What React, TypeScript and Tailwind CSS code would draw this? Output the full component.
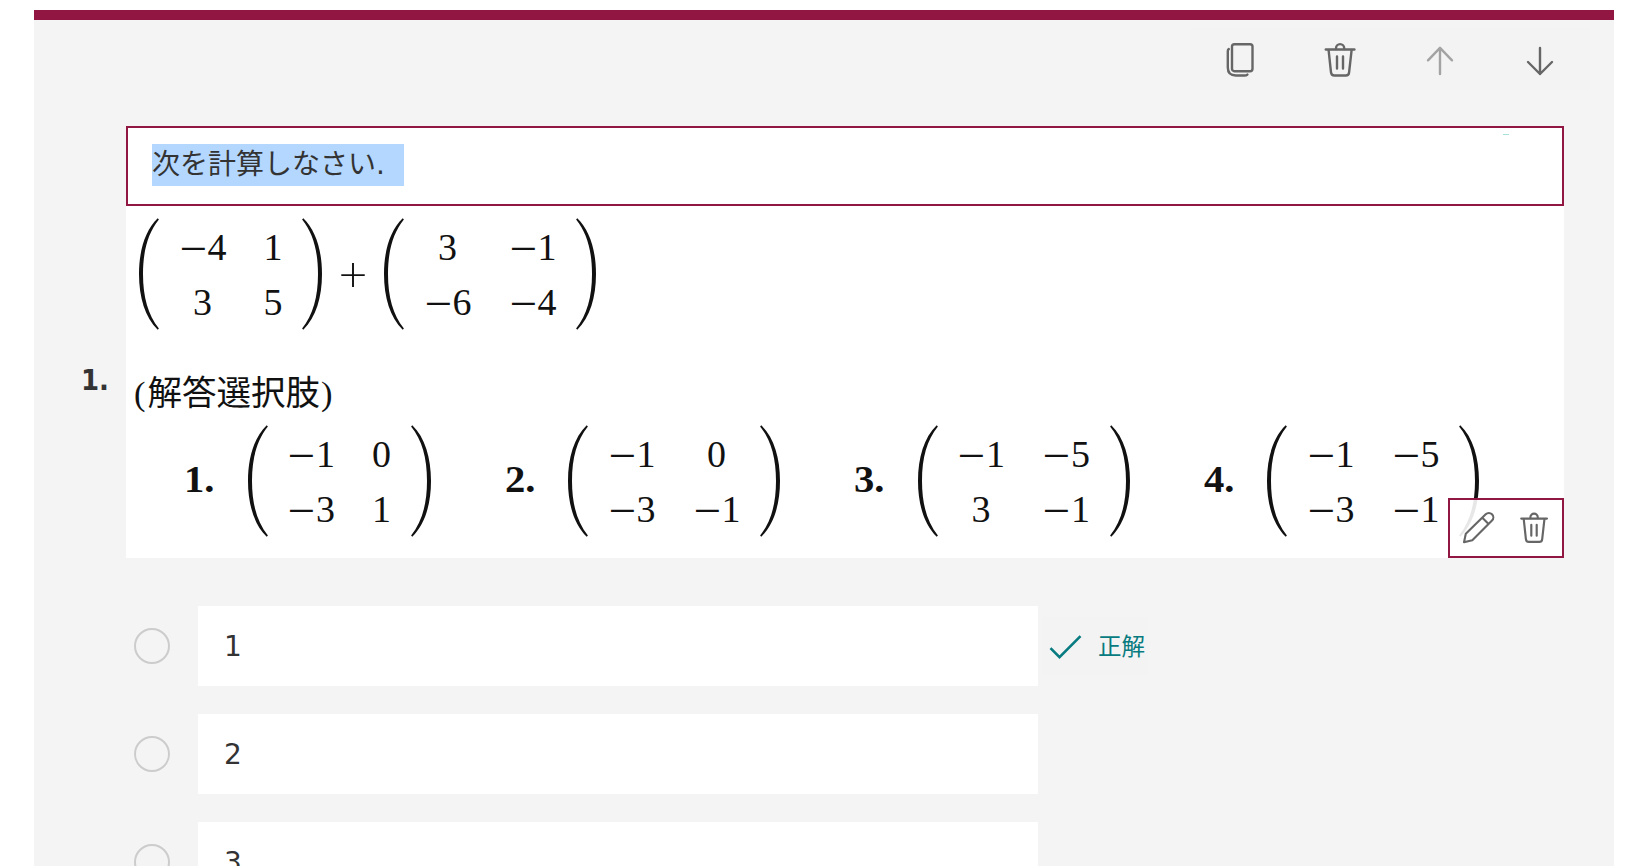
import React from "react";

const UI = "font-['DejaVu_Sans','Noto_Sans_CJK_JP',sans-serif]";

function Trash({ className }: { className: string }) {
  return (
    <svg viewBox="0 0 40 40" className={className} fill="none" stroke="#666" strokeWidth="2.4" strokeLinecap="round" strokeLinejoin="round">
      <path d="M5.8 9.5H34.4" />
      <path d="M16 9v-.8a4.1 4.1 0 0 1 8.2 0V9" />
      <path d="M8.6 10.2 11 32.3q.4 3.2 3.4 3.2h11.4q3 0 3.3-3.2L31.6 10.2" />
      <path d="M17 16.4V28.6M23 16.4V28.6" />
    </svg>
  );
}

function Copy() {
  return (
    <svg viewBox="0 0 40 40" className="h-10 w-10" fill="none" stroke="#666" strokeWidth="2.4" strokeLinecap="round" strokeLinejoin="round">
      <rect x="12" y="4.2" width="20.5" height="27" rx="2.4" />
      <path d="M8.8 9Q7.8 9.800 7.800 11.200v16.300q0 8 8 8h8.600q2 0 3-.9" />
    </svg>
  );
}

function Arrow({ up }: { up?: boolean }) {
  return (
    <svg viewBox="0 0 40 40" className="h-10 w-10" fill="none" stroke={up ? "#a3a3a3" : "#666"} strokeWidth="2.4" strokeLinecap="round" strokeLinejoin="round">
      <path d={up ? "M20 34V8M8 20.300 20 7.900 32 20.300" : "M20 7.900V34M8 22 20 34 32 22"} />
    </svg>
  );
}

function Paren({ right }: { right?: boolean }) {
  return (
    <svg viewBox="0 0 20 112" className="h-28 w-5 shrink-0" fill="#111">
      <path
        transform={right ? "translate(20 0) scale(-1 1)" : undefined}
        d="M18.700.3C6 12.500 0 33 0 56s6 43.500 18.700 55.700l1.200-1.300C9 97 4 79 4 56S9 15 19.900 1.600Z"
      />
    </svg>
  );
}

function Cell({ value }: { value: string }) {
  const negative = value.startsWith("−");
  return (
    <span className="flex h-[55px] items-center justify-center">
      {negative && (
        <span className="flex w-[29px] justify-center font-['Lato'] text-[39px] font-normal">
          <span className="inline-block scale-x-[1.36] scale-y-90">−</span>
        </span>
      )}
      <span className="w-[19px] text-center">{negative ? value.slice(1) : value}</span>
    </span>
  );
}

function Matrix({ cells }: { cells: string[] }) {
  return (
    <div className="flex items-center">
      <Paren />
      <div className="mx-[19.5px] grid grid-cols-[auto_auto] gap-x-[37px] pt-px font-['Liberation_Serif',serif] text-[38px] leading-[55px] text-[#111]">
        {cells.map((c, i) => (
          <Cell key={i} value={c} />
        ))}
      </div>
      <Paren right />
    </div>
  );
}

const answers = [
  ["−1", "0", "−3", "1"],
  ["−1", "0", "−3", "−1"],
  ["−1", "−5", "3", "−1"],
  ["−1", "−5", "−3", "−1"],
];

export default function App() {
  return (
    <div className={`h-[866px] w-[1648px] overflow-hidden bg-white pl-[34px] pt-2.5 ${UI}`}>
      <main className="h-[856px] w-[1580px] border-t-[10px] border-[#911742] bg-[#f4f4f4]">
        <div className="flex h-[106px] items-start justify-end pr-6 pt-2">
          <div className="flex h-[62px] bg-[#f3f3f3]">
            <button className="flex w-[100px] justify-center pt-3"><Copy /></button>
            <button className="flex w-[100px] justify-center pt-3"><Trash className="h-10 w-10" /></button>
            <button className="flex w-[100px] justify-center pt-3"><Arrow up /></button>
            <button className="flex w-[100px] justify-center pt-3"><Arrow /></button>
          </div>
        </div>

        <div className="flex">
          <div className="w-[92px] pl-[47px] pt-[238px] text-[28px] font-bold leading-[34px] text-[#333]">
            <span className="inline-block origin-left scale-x-[0.93]">1.</span>
          </div>
          <div className="w-[1438px]">
            <div className="relative flex h-20 items-start border-2 border-[#911742] bg-white pl-6 pt-4">
              <div className="h-[42px] w-[252px] whitespace-pre bg-[#b3d7ff] text-[28px] leading-[42px] text-[#333]">次を計算しなさい. </div>
              <span className="absolute right-[53px] top-1.5 h-px w-1.5 bg-[#a5e3da]" />
            </div>

            <div className="relative h-[352px] bg-white pt-3">
              <div className="flex items-center pl-[13px]">
                <Matrix cells={["−4", "1", "3", "5"]} />
                <span className="flex w-[62px] justify-center pb-0.5 font-['Lato'] text-[50px] font-light leading-none text-[#111]">+</span>
                <Matrix cells={["3", "−1", "−6", "−4"]} />
              </div>
              <div className="mt-[42px] flex h-[42px] items-center pl-2 font-['Liberation_Serif','Noto_Sans_CJK_JP',serif] text-[34.5px] leading-[42px] text-[#111]">
                <span>(</span><span className="ml-0.5">解答選択肢</span><span className="ml-px">)</span>
              </div>
              <div className="mt-[11px] flex items-center gap-[74px] pl-[58px]">
                {answers.map((cells, i) => (
                  <div key={i} className="flex items-center">
                    <div className="w-[63.5px] pb-[3px] font-['Liberation_Serif',serif] text-[37px] font-bold leading-[42px] text-[#111]">
                      <span className="inline-block origin-left scale-x-110">{i + 1}.</span>
                    </div>
                    <Matrix cells={cells} />
                  </div>
                ))}
              </div>
              <div className="absolute bottom-0 right-0 flex h-[60px] w-[116px] items-center border-2 border-[#911742] bg-white/90">
                <svg viewBox="0 0 36 36" className="ml-[10px] h-9 w-9" fill="none" stroke="#666" strokeWidth="2.1" strokeLinecap="round" strokeLinejoin="round">
                  <path d="M4 32.300 5.800 23.800 25.700 4.300a4.450 4.450 0 0 1 6.300 6.300L12.300 30.300ZM22.300 7.700l6.300 6.300" />
                </svg>
                <Trash className="ml-5 h-9 w-9" />
              </div>
            </div>
          </div>
        </div>

        <div className="mt-12 flex flex-col gap-7 pl-[100px]">
          {["1", "2", "3"].map((n) => (
            <div key={n} className="flex h-20 items-center">
              <span className="h-9 w-9 rounded-full border-2 border-[#ccc]" />
              <div className="ml-7 flex h-20 w-[840px] items-center bg-white pl-[26px] pt-0.5 text-[28px] text-[#333]">{n}</div>
              {n === "1" && (
                <div className="ml-1 flex h-[58px] w-[106px] items-center bg-[#f3f3f3] text-[23.5px] leading-none text-[#077b7f]">
                  <svg viewBox="0 0 34 26" className="ml-1.5 mt-0.5 h-[26px] w-[34px]" fill="none" stroke="currentColor" strokeWidth="2.6">
                    <path d="M2.500 14.200 11.500 23.200 32.500 2.200" />
                  </svg>
                  <span className="ml-4 mt-1 whitespace-nowrap">正解</span>
                </div>
              )}
            </div>
          ))}
        </div>
      </main>
    </div>
  );
}
